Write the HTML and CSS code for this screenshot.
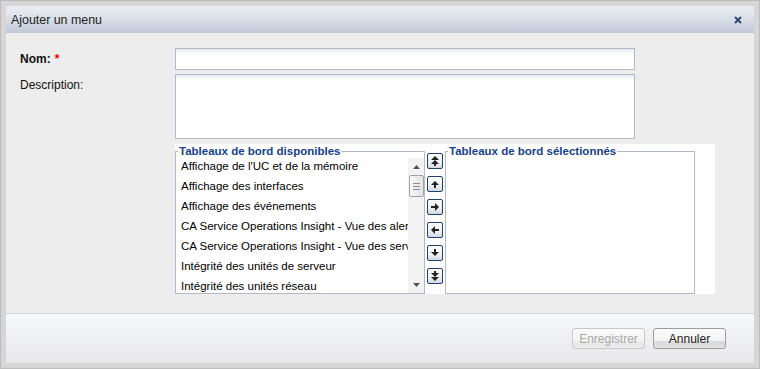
FILE: index.html
```html
<!DOCTYPE html>
<html lang="fr">
<head>
  <meta charset="UTF-8">
  <title>Ajouter un menu</title>
  <link rel="stylesheet" href="styles.css">
</head>
<body>

  <div class="window">
    <div class="header">
      <span class="title">Ajouter un menu</span>
      <span class="close">
        <svg width="8" height="8" viewBox="0 0 8 8"><path d="M1 1L7 7M7 1L1 7" stroke="#2d4b72" stroke-width="2"/></svg>
      </span>
    </div>

    <div class="body">
      <div class="row">
        <label class="label bold">Nom:<span class="req">*</span></label>
        <input type="text" class="field">
      </div>
      <div class="row">
        <label class="label">Description:</label>
        <textarea class="field area"></textarea>
      </div>
      <div class="row">
        <span class="label"></span>
        <div class="picker">
          <fieldset class="box">
            <legend>Tableaux de bord disponibles</legend>
            <div class="list-wrap">
              <ul class="list">
                <li>Affichage de l'UC et de la mémoire</li>
                <li>Affichage des interfaces</li>
                <li>Affichage des événements</li>
                <li>CA Service Operations Insight - Vue des alertes</li>
                <li>CA Service Operations Insight - Vue des services</li>
                <li>Intégrité des unités de serveur</li>
                <li>Intégrité des unités réseau</li>
              </ul>
              <div class="scrollbar">
                <span class="sb-arrow">
                  <svg width="7" height="4" viewBox="0 0 7 4"><path d="M0 4L3.5 0L7 4Z" fill="#555"/></svg>
                </span>
                <span class="thumb"><i></i><i></i><i></i></span>
                <span class="sb-track"></span>
                <span class="sb-arrow">
                  <svg width="7" height="4" viewBox="0 0 7 4"><path d="M0 0L3.5 4L7 0Z" fill="#555"/></svg>
                </span>
              </div>
            </div>
          </fieldset>

          <!-- boutons de déplacement -->
          <div class="arrows">
            <span class="arrow-btn">
              <svg width="14" height="14" viewBox="0 0 14 14"><path d="M3 6L7 2L11 6Z M3 10L7 6L11 10Z" fill="#222"/><rect x="6" y="10" width="2" height="2" fill="#222"/></svg>
            </span>
            <span class="arrow-btn">
              <svg width="14" height="14" viewBox="0 0 14 14"><path d="M3 8L7 4L11 8Z" fill="#222"/><rect x="6" y="8" width="2" height="3" fill="#222"/></svg>
            </span>
            <span class="arrow-btn">
              <svg width="14" height="14" viewBox="0 0 14 14"><path d="M7 3L11 7L7 11Z" fill="#222"/><rect x="3" y="6" width="4" height="2" fill="#222"/></svg>
            </span>
            <span class="arrow-btn">
              <svg width="14" height="14" viewBox="0 0 14 14"><path d="M7 3L3 7L7 11Z" fill="#222"/><rect x="7" y="6" width="4" height="2" fill="#222"/></svg>
            </span>
            <span class="arrow-btn">
              <svg width="14" height="14" viewBox="0 0 14 14"><path d="M3 6L7 10L11 6Z" fill="#222"/><rect x="6" y="3" width="2" height="3" fill="#222"/></svg>
            </span>
            <span class="arrow-btn">
              <svg width="14" height="14" viewBox="0 0 14 14"><path d="M3 4L7 8L11 4Z M3 8L7 12L11 8Z" fill="#222"/><rect x="6" y="2" width="2" height="2" fill="#222"/></svg>
            </span>
          </div>

          <fieldset class="box">
            <legend>Tableaux de bord sélectionnés</legend>
            <div class="list-wrap"></div>
          </fieldset>
        </div>
      </div>
    </div>

    <div class="footer">
      <button class="btn" disabled>Enregistrer</button>
      <button class="btn">Annuler</button>
    </div>
  </div>

</body>
</html>
```

FILE: styles.css
```css
body {
  margin: 0;
  font-family: "Liberation Sans", Arial, sans-serif;
  font-size: 12px;
  color: #000;
  background-color: #fff;
}
.window {
  width: 760px;
  height: 369px;
  box-sizing: border-box;
  border: 1px solid #bdbdbd;
  padding: 5px 5px 5px 5px;
  background-color: #d6d6d6;
  display: flex;
  flex-direction: column;
}
.header {
  height: 27px;
  display: flex;
  align-items: center;
  justify-content: space-between;
  padding: 0 12px 0 5px;
  background: linear-gradient(#eceef3, #dde2ea 40%, #c1c9d7);
}
.title {
  font-size: 12.4px;
  color: #222;
}
.close {
  display: flex;
  margin-top: 1px;
}
.body {
  flex: 1;
  background-color: #ededed;
  padding: 15px 0 0 14px;
}
.row {
  display: flex;
  margin-bottom: 4px;
}
.label {
  width: 155px;
  flex-shrink: 0;
  padding-top: 3px;
  line-height: 16px;
  color: #111;
}
.bold {
  font-weight: bold;
}
.req {
  color: #e00;
  margin-left: 4px;
}
.field {
  box-sizing: border-box;
  width: 460px;
  height: 22px;
  margin: 0;
  border: 1px solid #b5b8c8;
  background: linear-gradient(#e6e9ee, #fff 5px);
  font-family: "Liberation Sans", Arial, sans-serif;
  font-size: 12px;
  padding: 2px 4px;
}
.area {
  height: 65px;
  resize: none;
}
.picker {
  display: flex;
  gap: 2px;
  margin-top: 1px;
  padding-right: 20px;
  background-color: #fff;
}
.box {
  width: 250px;
  min-width: 0;
  flex-shrink: 0;
  box-sizing: border-box;
  margin: 0;
  padding: 0;
  border: 1px solid #b5b8c8;
  background-color: #fff;
}
.box legend {
  padding: 0 1px;
  margin-left: 2px;
  font-size: 11.5px;
  line-height: 14px;
  font-weight: bold;
  color: #15428b;
}
.list-wrap {
  height: 135px;
  display: flex;
  overflow: hidden;
}
.list {
  flex: 1;
  min-width: 0;
  list-style-type: none;
  margin: 0;
  padding: 0 0 0 5px;
  overflow: hidden;
}
.list li {
  height: 20px;
  line-height: 16px;
  font-size: 11.5px;
  white-space: nowrap;
  overflow: hidden;
}
.scrollbar {
  width: 16px;
  flex-shrink: 0;
  display: flex;
  flex-direction: column;
  background-color: #f3f3f3;
}
.sb-arrow {
  height: 17px;
  display: flex;
  align-items: center;
  justify-content: center;
}
.sb-track {
  flex: 1;
}
.thumb {
  height: 22px;
  box-sizing: border-box;
  margin: 0 0 0 1px;
  border: 1px solid #a3a3a3;
  border-radius: 2px;
  background: linear-gradient(90deg, #f7f7f7, #e3e3e3);
  display: flex;
  flex-direction: column;
  align-items: center;
  justify-content: center;
  gap: 2px;
}
.thumb i {
  display: block;
  width: 7px;
  height: 1px;
  background-color: #8a8a8a;
}
.arrows {
  width: 16px;
  flex-shrink: 0;
  display: flex;
  flex-direction: column;
  gap: 7px;
  padding-top: 9px;
}
.arrow-btn {
  width: 16px;
  height: 16px;
  box-sizing: border-box;
  border: 1px solid #1d4270;
  border-radius: 2px;
  background: linear-gradient(#fdfdfd, #eef0f3 60%, #d4d8de);
  display: flex;
  align-items: center;
  justify-content: center;
}
.footer {
  height: 50px;
  box-sizing: border-box;
  border-top: 1px solid #d3d3d3;
  background: linear-gradient(#f6f7f9, #e8e8ea);
  display: flex;
  justify-content: flex-end;
  align-items: flex-start;
  gap: 8px;
  padding: 14px 28px 0 0;
}
.btn {
  width: 73px;
  height: 21px;
  margin: 0;
  padding: 0;
  border: 1px solid #9c9c9c;
  border-radius: 3px;
  background: linear-gradient(#fcfcfc, #f2f2f2 62%, #dcdcdc 63%, #dcdcdc 92%, #ececec);
  font-family: "Liberation Sans", Arial, sans-serif;
  font-size: 12px;
  color: #222;
}
.btn:disabled {
  border-color: #c9c9c9;
  color: #a9a9a9;
  background: linear-gradient(#fbfbfb, #f3f3f3 62%, #e9e9e9 63%, #e9e9e9 92%, #f0f0f0);
}
```
